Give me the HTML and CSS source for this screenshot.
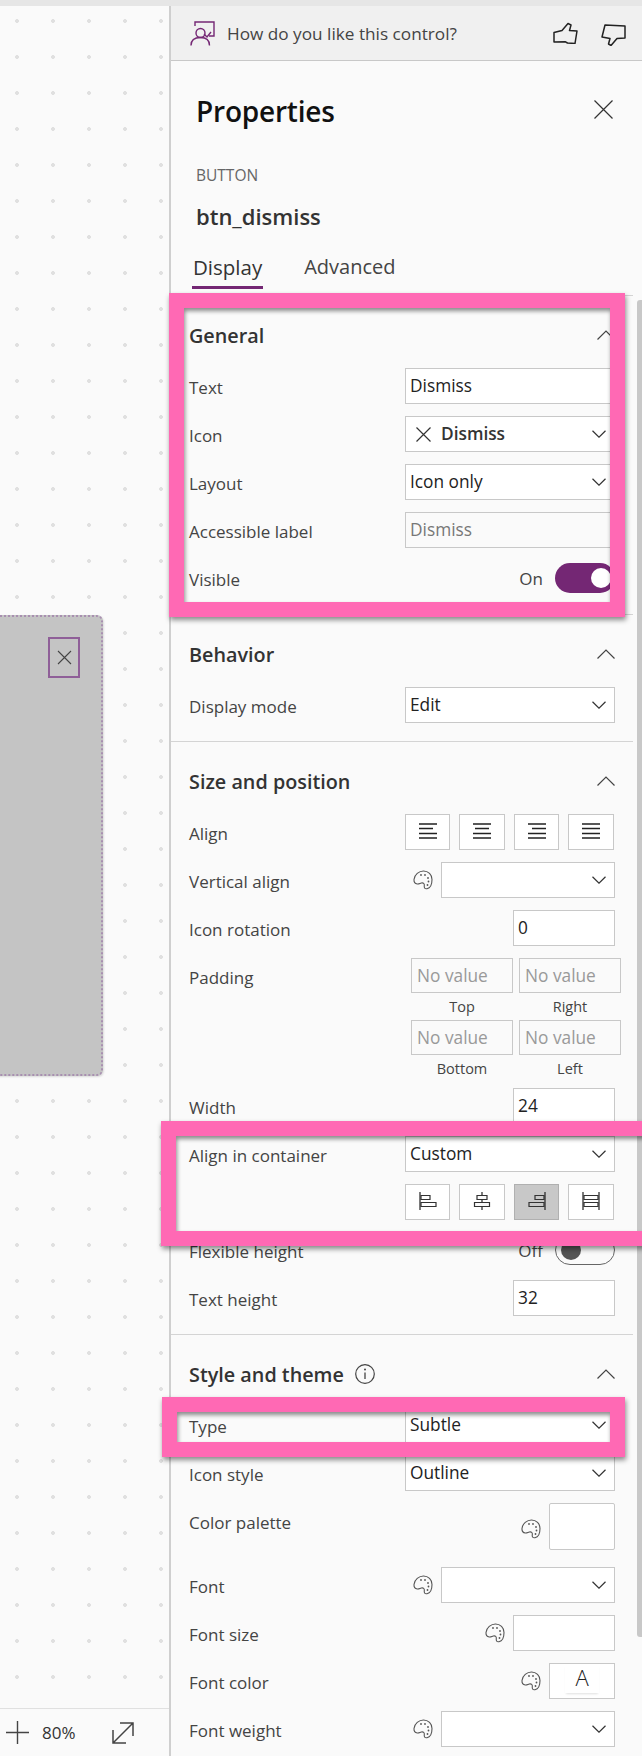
FILE: index.html
```html
<!DOCTYPE html>
<html lang="en">
<head>
<meta charset="utf-8">
<title>Properties</title>
<link rel="stylesheet" href="styles.css">
</head>
<body>
<svg class="defs" width="0" height="0" aria-hidden="true">
  <defs>
    <symbol id="chev" viewBox="0 0 14 8"><path d="M.5.8 7 7.2 13.5.8" fill="none" stroke="#333" stroke-width="1.2"/></symbol>
    <symbol id="up" viewBox="0 0 18 10"><path d="M.5 9.5 9 1l8.500 8.500" fill="none" stroke="#444" stroke-width="1.2"/></symbol>
    <symbol id="pal" viewBox="0 0 20 20"><g fill="none" stroke="#555" stroke-width="1.1"><path d="M1 9.500C1.500 4.500 6 1 10.500 1c4.800 0 8.500 3.800 8.500 8.500 0 4-1.500 8.500-5 9.200-2.500.4-3-1.200-2.700-3 .3-2-1-3.200-3-2.700-1.500.4-2.500 1.300-4 1C2.500 13.700.8 12 1 9.500Z"/></g><g fill="#555"><circle cx="8" cy="5" r=".9"/><circle cx="12" cy="5" r=".9"/><circle cx="15" cy="8" r=".9"/><circle cx="15.500" cy="11.500" r=".9"/><circle cx="14.500" cy="15" r=".9"/></g></symbol>
  </defs>
</svg>
<div class="app">
  <main class="canvas">
    <div class="card">
      <div class="dismiss">
        <svg class="dismiss-x" viewBox="0 0 15 15"><path d="M1 1l13 13M14 1 1 14" fill="none" stroke="#444" stroke-width="1.1"/></svg>
      </div>
    </div>
    <div class="zoombar">
      <svg class="plus" viewBox="0 0 23 23"><path d="M11.500 0v23M0 11.500h23" stroke="#444" stroke-width="1.400"/></svg>
      <span class="zoomval">80%</span>
      <svg class="expand" viewBox="0 0 22 22"><path d="M1 21 21 1M8 1h13v13M1 8v13h13" fill="none" stroke="#444" stroke-width="1.500"/></svg>
    </div>
  </main>
  <aside class="panel">
    <div class="feedback">
      <svg class="fb-icon" viewBox="0 0 25 25"><g fill="none" stroke="#742774" stroke-width="1.400"><path d="M5 5V1h19v14h-5"/><path d="m14 13 3 3 4-5"/><circle cx="10.500" cy="12" r="4.500"/><path d="M1 24.500c0-5 3.500-8 9.500-8s9 3 9 8"/></g></svg>
      <span class="fb-text">How do you like this control?</span>
      <svg class="thumb" viewBox="0 0 25 22"><path d="M1 10.500 9 8.500 15 1.500l3 1.500-1.500 5.500 7.500.5-2 12.500-7.500-.5-2-1.200-11.500.2Z" fill="none" stroke="#222" stroke-width="1.500" stroke-linejoin="round"/></svg>
      <svg class="thumb thumb-down" viewBox="0 0 25 22"><path d="M4 1 24 2v12l-8 .5-6 7-2.500-1.500 1.500-5.500L1 13Z" fill="none" stroke="#222" stroke-width="1.500" stroke-linejoin="round"/></svg>
    </div>
    <div class="head">
      <h1 class="title">Properties</h1>
      <svg class="close" viewBox="0 0 19 19"><path d="M.5.5l18 18M18.500.5l-18 18" stroke="#333" stroke-width="1.200"/></svg>
    </div>
    <div class="kind">BUTTON</div>
    <div class="name">btn_dismiss</div>
    <nav class="tabs">
      <span class="tab tab-on">Display</span>
      <span class="tab">Advanced</span>
    </nav>

    <section class="section sec-first">
      <div class="sec-head"><h2 class="sec-title">General</h2><svg class="up"><use href="#up"/></svg></div>
      <div class="row"><span class="label">Text</span><div class="field w-full">Dismiss</div></div>
      <div class="row"><span class="label">Icon</span><div class="field w-full sel strong"><svg class="opt-x" viewBox="0 0 15 15"><path d="M.5.5l14 14M14.500.5l-14 14" stroke="#333" stroke-width="1.200"/></svg>Dismiss<svg class="chev"><use href="#chev"/></svg></div></div>
      <div class="row"><span class="label">Layout</span><div class="field w-full sel">Icon only<svg class="chev"><use href="#chev"/></svg></div></div>
      <div class="row"><span class="label">Accessible label</span><div class="field w-full ghost">Dismiss</div></div>
      <div class="row"><span class="label">Visible</span><div class="switch"><span class="switch-text">On</span><span class="track track-on"><span class="knob"></span></span></div></div>
    </section>

    <section class="section">
      <div class="sec-head"><h2 class="sec-title">Behavior</h2><svg class="up"><use href="#up"/></svg></div>
      <div class="row"><span class="label">Display mode</span><div class="field w-full sel">Edit<svg class="chev"><use href="#chev"/></svg></div></div>
    </section>

    <section class="section">
      <div class="sec-head"><h2 class="sec-title">Size and position</h2><svg class="up"><use href="#up"/></svg></div>
      <div class="row"><span class="label">Align</span>
        <div class="btns">
          <div class="btn"><svg class="ic" viewBox="0 0 18 16"><path d="M0 1h18M0 5.500h14M0 10.500h18M0 15h18" stroke="#222" stroke-width="1.300"/></svg></div>
          <div class="btn"><svg class="ic" viewBox="0 0 18 16"><path d="M0 1h18M2 5.500h14M0 10.500h18M0 15h18" stroke="#222" stroke-width="1.300"/></svg></div>
          <div class="btn"><svg class="ic" viewBox="0 0 18 16"><path d="M0 1h18M4 5.500h14M0 10.500h18M0 15h18" stroke="#222" stroke-width="1.300"/></svg></div>
          <div class="btn"><svg class="ic" viewBox="0 0 18 16"><path d="M0 1h18M0 5.500h18M0 10.500h18M0 15h18" stroke="#222" stroke-width="1.300"/></svg></div>
        </div>
      </div>
      <div class="row"><span class="label">Vertical align</span><svg class="pal"><use href="#pal"/></svg><div class="field w-mid sel"><svg class="chev"><use href="#chev"/></svg></div></div>
      <div class="row"><span class="label">Icon rotation</span><div class="field w-small">0</div></div>
      <div class="row row-pad"><span class="label">Padding</span>
        <div class="pad-grid">
          <div class="pad-cell"><div class="field ghost pad-field">No value</div><div class="pad-label">Top</div></div>
          <div class="pad-cell"><div class="field ghost pad-field">No value</div><div class="pad-label">Right</div></div>
          <div class="pad-cell"><div class="field ghost pad-field">No value</div><div class="pad-label">Bottom</div></div>
          <div class="pad-cell"><div class="field ghost pad-field">No value</div><div class="pad-label">Left</div></div>
        </div>
      </div>
      <div class="row"><span class="label">Width</span><div class="field w-small">24</div></div>
      <div class="row"><span class="label">Align in container</span><div class="field w-full sel">Custom<svg class="chev"><use href="#chev"/></svg></div></div>
      <div class="row">
        <div class="btns">
          <div class="btn"><svg class="ic ic-18" viewBox="0 0 18 18"><path d="M1 0v18" stroke="#222" stroke-width="1.200"/><path d="M2 3.500h9v4H2zM2 10.500h15v4H2z" fill="none" stroke="#333" stroke-width="1.200"/></svg></div>
          <div class="btn"><svg class="ic ic-18" viewBox="0 0 18 18"><path d="M9 0v18" stroke="#222" stroke-width="1.200"/><path d="M4 3.500h10v4H4zM1.500 10.500h15v4h-15z" fill="#fafafa" stroke="#333" stroke-width="1.200"/></svg></div>
          <div class="btn btn-on"><svg class="ic ic-18" viewBox="0 0 18 18"><path d="M17 0v18" stroke="#222" stroke-width="1.200"/><path d="M7 3.500h9v4H7zM1 10.500h15v4H1z" fill="none" stroke="#333" stroke-width="1.200"/></svg></div>
          <div class="btn"><svg class="ic ic-18" viewBox="0 0 18 18"><path d="M1 0v18M17 0v18" stroke="#222" stroke-width="1.200"/><path d="M2 3.500h14v4H2zM2 10.500h14v4H2z" fill="none" stroke="#333" stroke-width="1.200"/></svg></div>
        </div>
      </div>
      <div class="row"><span class="label">Flexible height</span><div class="switch"><span class="switch-text">Off</span><span class="track track-off"><span class="knob"></span></span></div></div>
      <div class="row"><span class="label">Text height</span><div class="field w-small">32</div></div>
    </section>

    <section class="section sec-last">
      <div class="sec-head"><h2 class="sec-title">Style and theme</h2>
        <svg class="info" viewBox="0 0 20 20"><circle cx="10" cy="10" r="9.300" fill="none" stroke="#444" stroke-width="1.200"/><path d="M10 8.500v6.500" stroke="#444" stroke-width="1.300"/><circle cx="10" cy="5.600" r="1" fill="#444"/></svg>
        <svg class="up"><use href="#up"/></svg></div>
      <div class="row"><span class="label">Type</span><div class="field w-full sel">Subtle<svg class="chev"><use href="#chev"/></svg></div></div>
      <div class="row"><span class="label">Icon style</span><div class="field w-full sel">Outline<svg class="chev"><use href="#chev"/></svg></div></div>
      <div class="row row-swatch"><span class="label">Color palette</span><svg class="pal pal-swatch"><use href="#pal"/></svg><div class="swatch"></div></div>
      <div class="row"><span class="label">Font</span><svg class="pal"><use href="#pal"/></svg><div class="field w-mid sel"><svg class="chev"><use href="#chev"/></svg></div></div>
      <div class="row"><span class="label">Font size</span><svg class="pal"><use href="#pal"/></svg><div class="field w-small"></div></div>
      <div class="row"><span class="label">Font color</span><svg class="pal"><use href="#pal"/></svg><div class="field w-tiny letter"><span class="letter-a">A</span></div></div>
      <div class="row"><span class="label">Font weight</span><svg class="pal"><use href="#pal"/></svg><div class="field w-mid sel"><svg class="chev"><use href="#chev"/></svg></div></div>
    </section>

    <div class="scrollthumb"></div>
  </aside>
</div>
<div class="mark mark-general"></div>
<div class="mark mark-align"></div>
<div class="mark mark-type"></div>
</body>
</html>
```
FILE: styles.css
```css
* { box-sizing: border-box; }
html, body { margin: 0; padding: 0; }
body {
  position: relative;
  width: 642px;
  height: 1756px;
  overflow: hidden;
  background: #fafafa;
  font-family: "Open Sans", "Noto Sans", "Liberation Sans", sans-serif;
  color: #222;
}
.defs { position: absolute; }

.app {
  display: flex;
  height: 100%;
  border-top: 6px solid #e6e6e6;
}

/* Canvas */
.canvas {
  position: relative;
  width: 169px;
  flex: none;
  background-color: #fafafa;
  background-image: radial-gradient(circle, #e0e0e0 1.700px, transparent 2.200px);
  background-size: 36px 36px;
  background-position: -1px -3px;
}
.card {
  position: absolute;
  left: -10px;
  top: 609px;
  width: 113px;
  height: 461px;
  background: #c4c4c4;
  border: 2px dotted #a88fb0;
  border-radius: 6px;
  box-shadow: 1px 1px 2px rgba(0, 0, 0, .12);
}
.dismiss {
  position: absolute;
  left: 56px;
  top: 20px;
  width: 32px;
  height: 41px;
  border: 2px solid #8f5f98;
  display: flex;
  align-items: center;
  justify-content: center;
}
.dismiss-x { width: 15px; height: 15px; }
.zoombar {
  position: absolute;
  left: 0;
  right: 0;
  bottom: 0;
  height: 48px;
  background: #fafafa;
  border-top: 1px solid #e0e0e0;
  display: flex;
  align-items: center;
  padding: 0 0 0 6px;
}
.plus { width: 23px; height: 23px; flex: none; }
.zoomval { margin-left: 13px; font-size: 17px; color: #333; }
.expand { width: 22px; height: 22px; margin-left: 36px; flex: none; }

/* Panel */
.panel {
  position: relative;
  width: 473px;
  flex: none;
  border-left: 2px solid #cfcfcf;
  background: #fafafa;
}
.feedback {
  height: 55px;
  background: #f0f0f0;
  border-bottom: 1px solid #c8c8c8;
  display: flex;
  align-items: center;
  padding-left: 19px;
}
.fb-icon { width: 25px; height: 25px; flex: none; }
.fb-text { margin-left: 12px; font-size: 17.200px; color: #444; width: 326px; white-space: nowrap; }
.thumb { width: 25px; height: 22px; flex: none; }
.thumb-down { margin-left: 23px; margin-top: 4px; }

.head {
  display: flex;
  align-items: center;
  justify-content: space-between;
  margin-top: 30px;
  height: 42px;
  padding: 0 29px 0 25px;
}
.title { margin: 0 0 2px; font-size: 28px; line-height: 40px; font-weight: 600; letter-spacing: -.2px; color: #111; }
.close { width: 19px; height: 19px; margin-bottom: 6px; }
.kind { margin: 32px 0 0 25px; font-size: 15.500px; line-height: 20px; color: #666; }
.name { margin: 18px 0 0 25px; height: 28px; font-size: 22px; line-height: 26px; font-weight: 600; color: #333; }
.tabs {
  display: flex;
  gap: 40px;
  margin: 24px 0 0 21px;
  height: 34px;
}
.tab { font-size: 20px; line-height: 24px; color: #444; padding: 0 1px; }
.tab-on { font-size: 20.500px; color: #333; border-bottom: 3px solid #742774; height: 34px; }

.section {
  margin-right: 9px;
  padding: 26px 0 6px 18px;
  border-top: 1px solid #d4d4d4;
}
.sec-first { margin-top: 6px; }
.sec-last { padding-bottom: 0; }
.sec-head {
  display: flex;
  align-items: center;
  height: 28px;
  margin-bottom: 18px;
  padding-right: 18px;
}
.sec-title { margin: 0; font-size: 19.800px; line-height: 28px; font-weight: 600; color: #333; }
.up { width: 18px; height: 10px; margin-left: auto; margin-top: -2px; }
.info { width: 20px; height: 20px; margin-left: 11px; margin-top: -2px; }

.row {
  display: flex;
  align-items: flex-start;
  justify-content: flex-end;
  min-height: 36px;
  margin-bottom: 12px;
  padding-right: 18px;
}
.label {
  margin-right: auto;
  height: 36px;
  font-size: 17px;
  line-height: 40px;
  color: #444;
  white-space: nowrap;
}
.field {
  position: relative;
  height: 36px;
  background: #fff;
  border: 1px solid #c8c8c8;
  padding-left: 4px;
  font-size: 17.300px;
  line-height: 34px;
  color: #222;
  white-space: nowrap;
}
.w-full { width: 210px; flex: none; }
.w-mid { width: 174px; flex: none; }
.w-small { width: 102px; flex: none; }
.w-tiny { width: 66px; flex: none; }
.ghost { background: transparent; color: #777; }
.strong { font-weight: 600; color: #333; padding-left: 35px; }
.chev {
  position: absolute;
  right: 8px;
  top: 13px;
  width: 14px;
  height: 8px;
}
.opt-x { position: absolute; left: 10px; top: 10px; width: 15px; height: 15px; }
.btns {
  display: grid;
  grid-template-columns: 45px 46px 45px 46px;
  column-gap: 9px;
  margin-right: 1px;
}
.btn {
  height: 36px;
  border: 1px solid #c8c8c8;
  background: #fff;
  display: flex;
  align-items: center;
  justify-content: center;
}
.btn-on { background: #c8c8c8; border-color: #b0b0b0; }
.ic { width: 18px; height: 16px; margin-bottom: 3px; }
.ic-18 { height: 18px; margin-bottom: 2px; }

.pal { width: 20px; height: 20px; flex: none; margin: 8px 8px 0 0; }
.row-swatch { height: 47px; margin-bottom: 17px; }
.pal-swatch { margin-top: 16px; }
.swatch { width: 66px; height: 47px; background: #fff; border: 1px solid #c8c8c8; border-radius: 2px; flex: none; }
.letter { display: flex; justify-content: center; padding: 0; }
.letter-a {
  font-size: 22px;
  font-weight: 300;
  line-height: 27px;
  height: 29px;
  width: 34px;
  text-align: center;
  color: #222;
  box-shadow: 0 2px 2px -1px rgba(0, 0, 0, .12);
}

.row-pad { margin-bottom: 6px; padding-right: 12px; }
.pad-grid {
  display: grid;
  grid-template-columns: 102px 102px;
  column-gap: 6px;
}
.pad-field { height: 35px; line-height: 33px; color: #999; padding-left: 5px; }
.pad-label { height: 27px; line-height: 27px; text-align: center; font-size: 14.500px; color: #444; }

.switch { display: flex; align-items: center; height: 36px; }
.switch-text { font-size: 17px; color: #444; margin-right: 12px; }
.track {
  position: relative;
  display: block;
  width: 60px;
  height: 30px;
  border-radius: 15px;
}
.track-on { background: #742774; }
.track-off { background: #fafafa; border: 1px solid #666; }
.knob { position: absolute; width: 20px; height: 20px; border-radius: 50%; top: 5px; }
.track-on .knob { right: 4px; background: #fff; }
.track-off .knob { left: 5px; top: 4px; background: #555; }

.scrollthumb {
  position: absolute;
  right: 0;
  top: 294px;
  width: 5px;
  height: 1337px;
  background: #c8c8c8;
  border-radius: 3px 0 0 3px;
}

/* Pink annotation boxes laid over the screenshot */
.mark {
  position: absolute;
  border: 15px solid #ff69b4;
  box-shadow: 1px 3px 5px rgba(0, 0, 0, .45), inset 1px 3px 4px rgba(0, 0, 0, .45);
}
.mark-general { left: 169px; top: 293px; width: 456px; height: 324px; }
.mark-align { left: 161px; top: 1121px; width: 500px; height: 125px; }
.mark-type { left: 162px; top: 1397px; width: 463px; height: 60px; }
```
